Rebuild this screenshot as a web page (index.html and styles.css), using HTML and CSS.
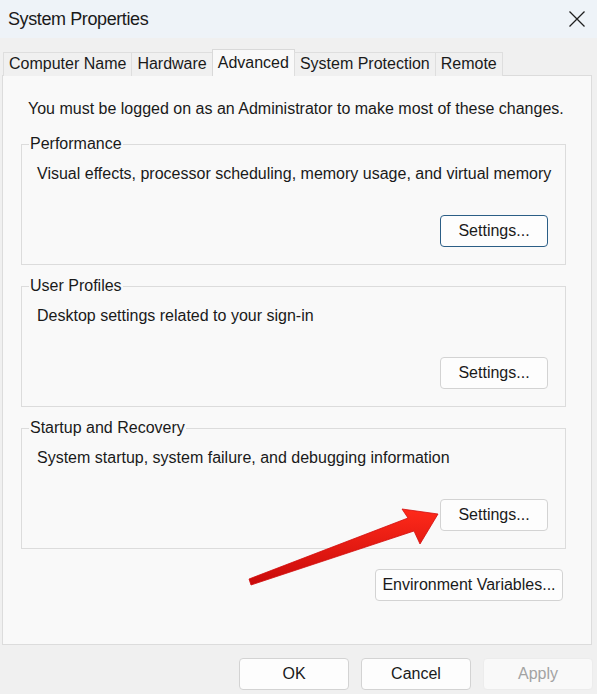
FILE: index.html
```html
<!DOCTYPE html>
<html lang="en">
    <head>
        <meta charset="UTF-8">
        <meta name="viewport" content="width=device-width, initial-scale=1.0">
        <title>System Properties</title>
        <link rel="stylesheet" href="styles.css">
    </head>

    <body>
        <div class="window">
            <header class="titlebar">
                <span class="title">System Properties</span>
                <svg class="close" width="18" height="18" viewBox="0 0 18 18">
                    <path d="M1.5 1.5 L16.5 16.5 M16.5 1.5 L1.5 16.5" stroke="#1f1f1f" stroke-width="1.3" fill="none"/>
                </svg>
            </header>

            <nav class="tabs">
                <span class="tab">Computer Name</span>
                <span class="tab">Hardware</span>
                <span class="tab active">Advanced</span>
                <span class="tab">System Protection</span>
                <span class="tab">Remote</span>
            </nav>

            <section class="panel">
                <p class="intro">You must be logged on as an Administrator to make most of these changes.</p>

                <fieldset class="group">
                    <legend>Performance</legend>
                    <p class="desc">Visual effects, processor scheduling, memory usage, and virtual memory</p>
                    <div class="group-actions">
                        <button class="btn focused">Settings...</button>
                    </div>
                </fieldset>

                <fieldset class="group">
                    <legend>User Profiles</legend>
                    <p class="desc">Desktop settings related to your sign-in</p>
                    <div class="group-actions">
                        <button class="btn">Settings...</button>
                    </div>
                </fieldset>

                <fieldset class="group">
                    <legend>Startup and Recovery</legend>
                    <p class="desc">System startup, system failure, and debugging information</p>
                    <div class="group-actions">
                        <button class="btn">Settings...</button>
                    </div>
                </fieldset>

                <div class="env-row">
                    <button class="btn env">Environment Variables...</button>
                </div>
            </section>

            <footer class="dialog-actions">
                <button class="btn wide">OK</button>
                <button class="btn wide">Cancel</button>
                <button class="btn wide" disabled>Apply</button>
            </footer>

            <!-- red annotation arrow pointing at the Startup settings button -->
            <svg class="annotation" width="597" height="694" viewBox="0 0 597 694">
                <defs>
                    <linearGradient id="arrowFill" x1="0" y1="0" x2="0" y2="1">
                        <stop offset="0" stop-color="#ff2a1a"/>
                        <stop offset="1" stop-color="#c80a0a"/>
                    </linearGradient>
                </defs>
                <polygon points="249,579 408,518 402,509 438,514 420,544 414,531 251,585"
                         fill="url(#arrowFill)" stroke="#d30d0d" stroke-width="0.8" stroke-linejoin="round"/>
            </svg>
        </div>
    </body>
</html>
```

FILE: styles.css
```css
* {
    font-family: 'Liberation Sans', Arial, sans-serif;
    color: #1a1a1a;
    box-sizing: border-box;
}

body {
    margin: 0px;
    width: 597px;
    height: 694px;
    overflow: hidden;
    background: #f0f0f0;
}

.window {
    position: relative;
    display: flex;
    flex-direction: column;
    height: 694px;
}

.titlebar {
    height: 38px;
    background: #eef3f8;
    display: flex;
    align-items: center;
    justify-content: space-between;
    padding: 0 11px 0 8px;
}

.title {
    font-size: 18px;
    letter-spacing: -0.4px;
}

.close {
    display: block;
}

.tabs {
    display: flex;
    align-items: flex-end;
    height: 38px;
    padding-left: 3px;
    position: relative;
    z-index: 1;
    margin-bottom: -1px;
}

.tab {
    height: 24px;
    line-height: 22px;
    font-size: 16px;
    padding: 0 5px;
    background: #f0f0f0;
    border: 1px solid #dedede;
    border-bottom: none;
    margin-right: -1px;
}

.tab.active {
    height: 27px;
    line-height: 26px;
    background: #f9f9f9;
    border-color: #d9d9d9;
}

.panel {
    margin: 0 5px 0 2px;
    height: 570px;
    background: #f9f9f9;
    border: 1px solid #dcdcdc;
    padding: 24px 25px 0 18px;
    display: flex;
    flex-direction: column;
}

.intro {
    margin: 0 0 17px 7px;
    font-size: 16px;
    line-height: 18px;
    white-space: nowrap;
}

.group {
    min-width: 0;
    margin: 0 0 12px 0;
    border: 1px solid #dcdcdc;
    padding: 12px 17px 17px 15px;
}

.group legend {
    font-size: 16px;
    line-height: 18px;
    padding: 0 1px;
    margin-left: -8px;
}

.desc {
    margin: 0;
    font-size: 16px;
    line-height: 18px;
    white-space: nowrap;
}

.group-actions {
    display: flex;
    justify-content: flex-end;
    margin-top: 32px;
}

.btn {
    height: 32px;
    width: 108px;
    font-size: 16px;
    background: #fdfdfd;
    border: 1px solid #d3d3d3;
    border-radius: 4px;
    padding: 0;
}

.btn.focused {
    border-color: #2b5e86;
}

.env-row {
    display: flex;
    justify-content: flex-end;
    margin-top: 8px;
    padding-right: 3px;
}

.btn.env {
    width: 188px;
}

.dialog-actions {
    display: flex;
    justify-content: flex-end;
    gap: 12px;
    padding: 13px 4px 0 0;
}

.btn.wide {
    width: 110px;
}

.btn:disabled {
    color: #a3a3a3;
    background: #f9f9f9;
    border-color: #ececec;
}

.annotation {
    position: absolute;
    top: 0;
    left: 0;
    pointer-events: none;
}
```
